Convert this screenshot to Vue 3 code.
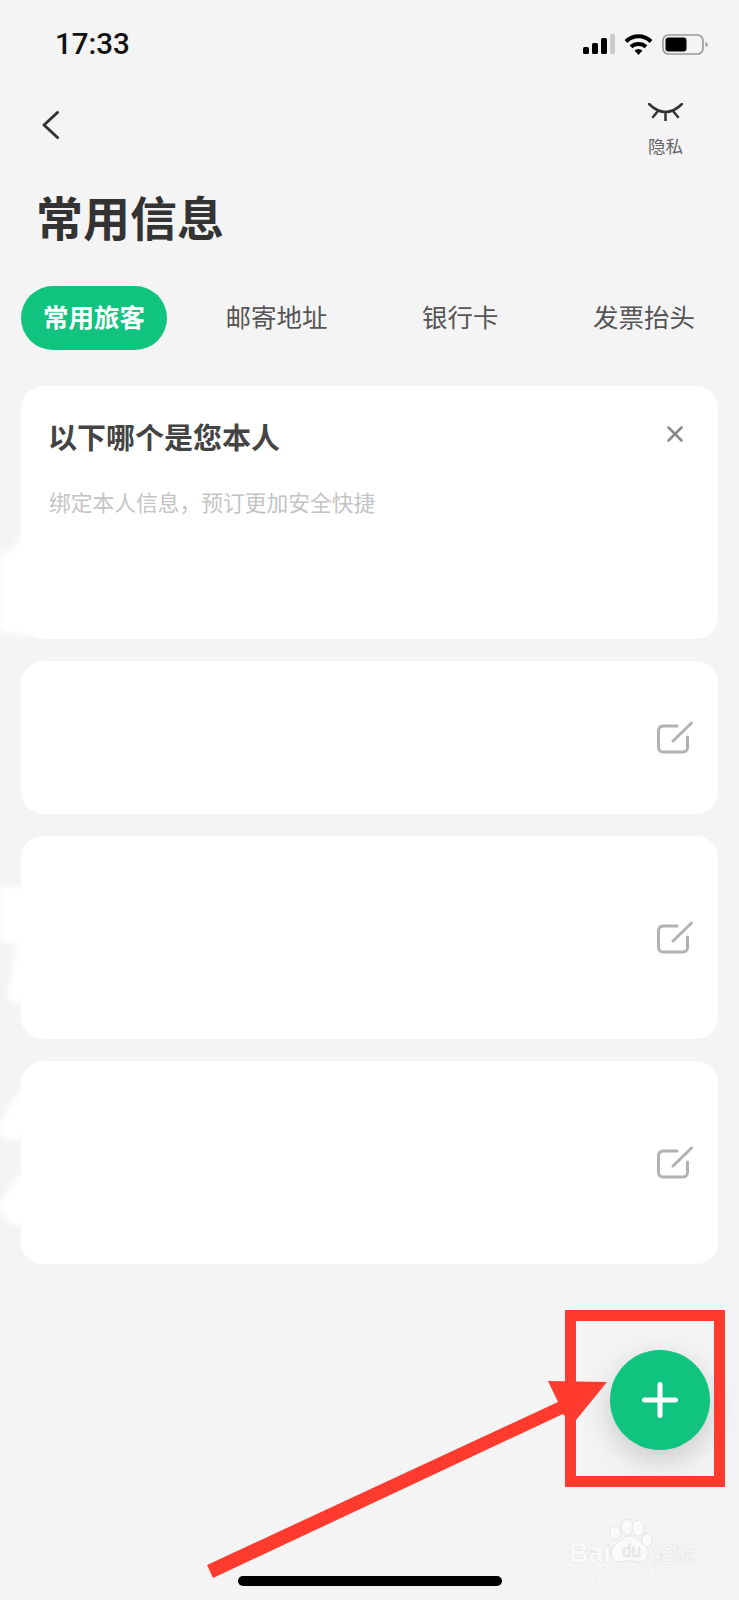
<script setup>
const tabs = ['常用旅客', '邮寄地址', '银行卡', '发票抬头']

// 打码后的卡片，只剩编辑图标
const blankCards = [
  { id: 1, height: 153 },
  { id: 2, height: 203 },
  { id: 3, height: 203 },
]
</script>

<template>
  <div class="page">
    <div class="status-bar">
      <span class="time">17:33</span>
      <div class="status-icons">
        <svg width="32" height="20" viewBox="0 0 32 20">
          <rect x="0" y="13" width="6" height="7" rx="1.5" fill="#000" />
          <rect x="9" y="9" width="6" height="11" rx="1.5" fill="#000" />
          <rect x="18" y="4" width="6" height="16" rx="1.5" fill="#000" />
          <rect x="27" y="0" width="5" height="20" rx="1" fill="#ccc" />
        </svg>
        <svg width="29" height="21" viewBox="0 0 29 21" fill="none" stroke="#000" stroke-width="4">
          <path d="M2 7.500C9 .5 20 .5 27 7.500" />
          <path d="M7 12.800C11 9 18 9 22 12.800" />
          <path d="M10.500 16.500Q14.500 13.500 18.500 16.500L14.500 21Z" fill="#000" stroke="none" />
        </svg>
        <svg width="46" height="21" viewBox="0 0 46 21">
          <rect x="1" y="1" width="40" height="19" rx="5.500" fill="none" stroke="#999" stroke-width="1.600" />
          <rect x="3.500" y="3.500" width="21" height="14" rx="3" fill="#000" />
          <path d="M43.500 8c1.500.5 2.300 1.300 2.300 2.500s-.8 2-2.300 2.500z" fill="#999" />
        </svg>
      </div>
    </div>

    <div class="nav">
      <svg class="back" width="17" height="28" viewBox="0 0 17 28" fill="none" stroke="#333" stroke-width="3" stroke-linecap="round" stroke-linejoin="round">
        <path d="M15.500 1.500L2 14l13.500 12.500" />
      </svg>
      <div class="privacy">
        <svg width="35" height="18" viewBox="0 0 35 18" fill="none" stroke="#333" stroke-width="2.500" stroke-linecap="round">
          <path d="M1 1Q17.500 17 34 1" />
          <path d="M17.500 9v9M10 8l-5 6M25 8l5 6" />
        </svg>
        <span>隐私</span>
      </div>
    </div>

    <h1 class="title">常用信息</h1>

    <div class="tabs">
      <div v-for="(tab, i) in tabs" :key="tab" class="tab" :class="{ active: i === 0 }">{{ tab }}</div>
    </div>

    <div class="cards">
      <div class="card bind-card">
        <div class="bind-head">
          <span class="bind-title">以下哪个是您本人</span>
          <svg width="16" height="16" viewBox="0 0 16 16" fill="none" stroke="#888" stroke-width="2.500" stroke-linecap="round">
            <path d="M1.500 1.500l13 13M14.500 1.500l-13 13" />
          </svg>
        </div>
        <p class="bind-sub">绑定本人信息，预订更加安全快捷</p>
      </div>

      <div v-for="card in blankCards" :key="card.id" class="card blank-card" :style="{ height: card.height + 'px' }">
        <svg width="36" height="33" viewBox="0 0 36 33" fill="none" stroke="#b2b2b2" stroke-width="3" stroke-linecap="round">
          <path d="M20 5H6a4.500 4.500 0 0 0-4.500 4.500v17A4.500 4.500 0 0 0 6 31h20a4.500 4.500 0 0 0 4.500-4.500V16" />
          <path d="M16 20L34.500 2" />
        </svg>
      </div>
    </div>

    <div class="home-bar"></div>

    <!-- 抹除信息时留下的白色痕迹 -->
    <svg class="smudges" width="40" height="1600" viewBox="0 0 40 1600" fill="#fff">
      <path d="M24 528L12 551H-4V631L30 636Z" />
      <path d="M24 886H-4V943H24Z" />
      <path d="M24 944H18L8 990L9 1003H24Z" />
      <path d="M24 1084L6 1112L-2 1130V1138L24 1141Z" />
      <path d="M24 1168L6 1194L-2 1206L8 1222L24 1228Z" />
    </svg>

    <div class="fab">
      <svg width="36" height="36" viewBox="0 0 36 36" stroke="#fff" stroke-width="5" stroke-linecap="round">
        <path d="M18 2.500v31M2.500 18h31" />
      </svg>
    </div>

    <!-- 百度经验的标注和水印 -->
    <div class="mark-box"></div>
    <svg class="mark-arrow" width="739" height="1600" viewBox="0 0 739 1600" fill="#ff3b30">
      <path d="M207 1565L558 1402L548 1381L607 1382L572 1425L563 1414L213 1578Z" />
    </svg>

    <svg class="watermark" width="150" height="80" viewBox="0 0 150 80">
      <g fill="#fafafa" stroke="#dedede" stroke-width="0.800">
        <ellipse cx="55" cy="23" rx="5.500" ry="6.500" />
        <ellipse cx="67" cy="17" rx="6" ry="7.500" />
        <ellipse cx="78" cy="18" rx="6" ry="8" />
        <ellipse cx="87" cy="30" rx="5.500" ry="6.500" />
        <path d="M70 26c7 0 10 6 15 10 6 5 3 16-6 16-4 0-6-1.500-9-1.500S65 52 60 52c-8 0-12-10-6-16 5-4 9-10 16-10z" />
      </g>
      <g class="wm-text">
        <text x="9" y="52" font-size="28" font-weight="700" textLength="42" lengthAdjust="spacingAndGlyphs">Bai</text>
        <text x="62" y="47" font-size="19" textLength="19" lengthAdjust="spacingAndGlyphs" class="wm-du">du</text>
        <text x="93" y="52" font-size="22" class="wm-cjk">经验</text>
        <text x="10" y="69" font-size="16" textLength="128" lengthAdjust="spacing" class="wm-url">jingyan.baidu.com</text>
      </g>
    </svg>
  </div>
</template>

<style>
html, body { background: #f4f4f4; }
</style>

<style scoped>
.page {
  position: relative;
  width: 739px;
  height: 1600px;
  overflow: hidden;
  display: flex;
  flex-direction: column;
  background: #f4f4f4;
  font-family: "Liberation Sans", "Noto Sans CJK SC", sans-serif;
  color: #333;
}

.status-bar {
  height: 88px;
  flex: none;
  display: flex;
  align-items: center;
  justify-content: space-between;
  padding: 0 31px 0 55px;
}
.time {
  font-family: Roboto, sans-serif;
  font-size: 29.500px;
  font-weight: 500;
  color: #111;
}
.status-icons {
  display: flex;
  align-items: center;
  gap: 9px;
}

.nav {
  display: flex;
  justify-content: space-between;
  align-items: flex-start;
  padding: 15px 56px 0 42px;
}
.back { margin-top: 8px; }
.privacy {
  display: flex;
  flex-direction: column;
  align-items: center;
  gap: 16px;
  font-size: 17.500px;
  line-height: 20px;
  color: #666;
}

.title {
  margin: 33px 0 0 36px;
  font-size: 47px;
  line-height: 60px;
  font-weight: 700;
  color: #333;
}

.tabs {
  display: flex;
  gap: 50.500px;
  margin: 36px 0 0 21px;
}
.tab {
  height: 64px;
  padding: 0 22px;
  display: flex;
  align-items: center;
  font-size: 25.500px;
  line-height: 62px;
  color: #555;
}
.tab.active {
  margin-right: -14px;
  border-radius: 32px;
  background: #10c47f;
  color: #fff;
  font-weight: 700;
}

.cards {
  display: flex;
  flex-direction: column;
  gap: 22px;
  margin: 36px 21px 0 21px;
}
.card {
  box-sizing: border-box;
  background: #fff;
  border-radius: 22px;
}
.bind-card {
  height: 253px;
  padding: 33px 35px 0 27px;
}
.bind-head {
  display: flex;
  justify-content: space-between;
}
.bind-head svg { margin-top: 7px; }
.bind-title {
  font-size: 29px;
  line-height: 40px;
  font-weight: 700;
  color: #444;
}
.bind-sub {
  margin: 30px 0 0 1px;
  font-size: 21.750px;
  line-height: 30px;
  color: #c4c4c4;
}
.blank-card {
  display: flex;
  align-items: center;
  justify-content: flex-end;
  padding-right: 25px;
}

.home-bar {
  width: 264px;
  height: 10px;
  margin: auto 0 14px 238px;
  border-radius: 5px;
  background: #000;
}

.smudges {
  position: absolute;
  left: 0;
  top: 0;
  filter: blur(3px);
}

.fab {
  position: absolute;
  left: 610px;
  top: 1350px;
  width: 100px;
  height: 100px;
  border-radius: 50%;
  display: flex;
  align-items: center;
  justify-content: center;
  background: #10c47f;
  box-shadow: 0 10px 30px rgba(0, 0, 0, 0.18);
}

.mark-box {
  position: absolute;
  left: 565px;
  top: 1310px;
  width: 160px;
  height: 177px;
  box-sizing: border-box;
  border: 11px solid #ff3b30;
}
.mark-arrow {
  position: absolute;
  left: 0;
  top: 0;
}

.watermark {
  position: absolute;
  left: 560px;
  top: 1510px;
}
.wm-text text {
  font-family: "Liberation Sans", sans-serif;
  fill: #fafafa;
  stroke: #d6d6d6;
  stroke-width: 0.700px;
  paint-order: stroke;
}
.wm-text .wm-du {
  fill: #ececec;
  stroke: #d0d0d0;
}
.wm-text .wm-cjk {
  font-family: "Noto Sans CJK SC", sans-serif;
}
.wm-text .wm-url {
  stroke: #e2e2e2;
  stroke-width: 0.400px;
}
</style>
